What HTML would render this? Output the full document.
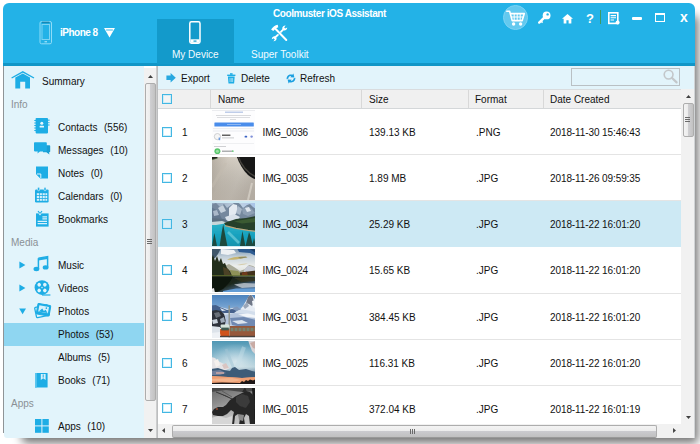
<!DOCTYPE html>
<html><head><meta charset="utf-8">
<style>
*{box-sizing:border-box;margin:0;padding:0}
html,body{width:700px;height:444px;overflow:hidden;background:#fff;font-family:"Liberation Sans",sans-serif;font-size:10px;color:#111}
.a{position:absolute}
svg{position:absolute;overflow:visible}
#shadow{left:22px;top:16px;width:676px;height:427px;border-radius:4px;background:rgba(0,0,0,.55);filter:blur(5px)}
#win{left:3px;top:3px;width:692px;height:434.5px;background:#fff;border-radius:6px 6px 0 0;overflow:hidden}
#hdr{left:3px;top:3px;width:692px;height:61px;background:#23b2e7;border-radius:6px 6px 0 0}
#strip{left:3px;top:63px;width:692px;height:3px;background:#1196c7}
#tab1{left:157px;top:19px;width:77px;height:45px;background:#139acb}
.w{color:#fff;white-space:nowrap}
.tl{top:48px;height:13px;line-height:13px;font-size:10px;color:#f2fbff}
#side{left:4px;top:66px;width:140px;height:371.5px;background:#e2f4fb;border-radius:0 0 0 3px}
#lb{left:3px;top:66px;width:1px;height:367px;background:#8f9497}
.si{position:absolute;left:4px;width:140px;height:23px;line-height:23px;white-space:nowrap}
.si span{position:absolute;left:54px;word-spacing:.5px}
.sec{position:absolute;left:11px;color:#8a9095;height:23px;line-height:23px}
#sscroll{left:144px;top:68px;width:13px;height:369.5px;background:#f1f1f1}
#sep{left:156px;top:66px;width:2px;height:371.5px;background:linear-gradient(90deg,#d4d4d4,#b4b6b8)}
#tb{left:158px;top:66px;width:537px;height:23px;background:#e2f4fb}
.tbi{position:absolute;top:67px;height:23px;line-height:23px}
#th{left:158px;top:89px;width:523px;height:20px;background:#f0f0f0;border-top:1px solid #d9dcde;border-bottom:1px solid #d4d7d9}
.thc{position:absolute;top:90px;height:20px;line-height:20px;padding-left:7px}
.vl{position:absolute;top:90px;height:18px;width:1px;background:#d8d8d8}
.row{position:absolute;left:158px;width:523px;height:46px;border-bottom:1px solid #e4e4e4;line-height:48px;white-space:nowrap}
.row.sel{background:#cde9f4;border-bottom-color:#cde9f4}
.cb{position:absolute;left:162px;width:10px;height:10px;border:1px solid #43b7e3;background:rgba(255,255,255,.25);box-shadow:inset 0 0 0 1px rgba(190,232,248,.7)}
.row b{font-weight:normal;position:absolute;top:0}
.thumb{position:absolute;left:54px;top:2px;width:43px;height:43px;overflow:hidden}
.thumb svg{left:0;top:0}
#vs{left:681px;top:89px;width:14px;height:335px;background:#f1f1f1}
#hs{left:158px;top:424px;width:537px;height:13.5px;background:#f1f1f1}
.thb{position:absolute;border:1px solid #adadad;border-radius:2px}
#rb{left:694px;top:66px;width:1px;height:371.5px;background:#d0d3d5}
</style></head><body>
<div class="a" id="shadow"></div>
<div class="a" id="win"></div>
<div class="a" id="hdr"></div><div class="a" id="strip"></div>
<div class="a" id="tab1"></div>
<div class="a w" style="left:273px;top:8px;height:12px;line-height:12px;font-weight:bold;letter-spacing:-.42px">Coolmuster iOS Assistant</div>
<div class="a w" style="left:60px;top:27px;height:12px;line-height:12px;font-weight:bold;letter-spacing:-.5px">iPhone 8</div>
<div class="a w tl" style="left:172px">My Device</div>
<div class="a w tl" style="left:251px">Super Toolkit</div>

<!-- header icons -->
<svg id="ic-dev" style="left:39px;top:20px" width="14" height="25" viewBox="0 0 14 25"><rect x="1" y="1.5" width="11.5" height="22.3" rx="1.5" fill="none" stroke="#8fdcf7" stroke-width="1"/><rect x="3" y="4.5" width="7.5" height="15" fill="none" stroke="#7dd3f3" stroke-width="1"/><rect x="3" y="1.6" width="7.5" height="1.6" fill="#1687b5"/><rect x="5.5" y="21" width="2.5" height="1.4" fill="#8fdcf7"/></svg>
<svg id="ic-dd" style="left:104px;top:28px" width="11" height="10" viewBox="0 0 12 11"><path d="M0 0H12L6 10.5Z" fill="#fff"/><path d="M2.3 2.2H9.7" stroke="#23b2e7" stroke-width="1"/></svg>
<svg id="ic-phone" style="left:189px;top:21px" width="12" height="23" viewBox="0 0 12 23"><rect x="0.8" y="0.8" width="10.2" height="21.4" rx="1.6" fill="none" stroke="#fff" stroke-width="1.5"/><rect x="1.5" y="18.3" width="9" height="3.5" fill="#fff"/><rect x="4.5" y="19.5" width="3" height="1.2" fill="#139acb"/></svg>
<svg id="ic-tools" style="left:271px;top:25px" width="18" height="18" viewBox="0 0 18 18"><g stroke="#fff" stroke-linecap="round" fill="none"><path d="M1.2 5.2Q3.6 1.6 7 0.9" stroke-width="2.6" stroke-linecap="butt"/><path d="M4.4 3.8L15.3 15" stroke-width="2"/><path d="M9.9 6.9L12.6 4.2" stroke-width="1.9"/><path d="M3.8 12.8L6.9 9.9" stroke-width="1.9"/></g><path d="M11.2 3.4A2.9 2.9 0 0 1 14.6 0.6L13.2 2.4L14.2 3.6L16.2 2.6A2.9 2.9 0 0 1 13 5.6Z" fill="#fff"/><path d="M5.6 13.2A2.9 2.9 0 0 1 2.4 16.2L3.8 14.4L2.8 13.2L0.8 14.2A2.9 2.9 0 0 1 4 11.2Z" fill="#fff"/></svg>

<div class="a" style="left:503px;top:5px;width:25px;height:25px;border-radius:50%;background:#63c9ef;border:1px solid #7dd3f4"></div>
<svg id="ic-cart" style="left:506px;top:10px" width="20" height="17" viewBox="0 0 20 17"><g fill="none" stroke="#fff" stroke-width="1.6" stroke-linejoin="round" stroke-linecap="round"><path d="M0.8 1.2H3.6L6.2 10.6H16.2L18.3 3.6H4.4"/><path d="M8.2 4V10M11.2 4V10M14.2 4V10M5.4 7H17" stroke-width="1"/></g><circle cx="7.6" cy="14" r="1.7" fill="#fff"/><circle cx="14.6" cy="14" r="1.7" fill="#fff"/></svg>
<svg id="ic-key" style="left:538px;top:11px" width="13" height="13" viewBox="0 0 13 13"><circle cx="8.6" cy="4.4" r="3.9" fill="#fff"/><circle cx="9.6" cy="3.4" r="1.2" fill="#23b2e7"/><path d="M6 6.8L1.2 11.6" stroke="#fff" stroke-width="2.4" stroke-linecap="round"/><path d="M3 10l1.6 1.6" stroke="#fff" stroke-width="1.6"/></svg>
<svg id="ic-home" style="left:562px;top:14px" width="11" height="9.5" viewBox="0 0 12 11" preserveAspectRatio="none"><path d="M6 0L12 5.6H10.2V11H7.2V7.2H4.8V11H1.8V5.6H0Z" fill="#fff"/></svg>
<div class="a w" style="left:586px;top:12px;height:14px;line-height:14px;font-weight:bold;font-size:13px">?</div>
<div class="a" style="left:600px;top:10px;width:1px;height:14px;background:#3d9a64"></div>
<svg id="ic-list" style="left:608px;top:12px" width="12" height="13" viewBox="0 0 12 13"><rect x="0.8" y="0.8" width="9" height="10.6" fill="none" stroke="#fff" stroke-width="1.6"/><path d="M2.6 3.6H8M2.6 5.8H8M2.6 8H6" stroke="#fff" stroke-width="1.1"/><circle cx="9.6" cy="10.6" r="2" fill="#fff"/></svg>
<div class="a" style="left:632px;top:16.5px;width:10px;height:3.5px;background:#fff;border-radius:1px"></div>
<div class="a" style="left:655px;top:13px;width:10px;height:9px;border:1px solid #fff;border-top-width:2px"></div>
<div class="a w" style="left:680px;top:9px;height:16px;line-height:16px;font-weight:bold;font-size:14px;">x</div>

<!-- sidebar -->
<div class="a" id="side"></div><div class="a" id="lb"></div>
<div class="si" style="top:323px;background:#8fd6f1"></div>
<div class="si" style="top:70px"><span style="left:38px">Summary</span></div>
<div class="sec" style="top:93px">Info</div>
<div class="si" style="top:116px"><span>Contacts&nbsp; (556)</span></div>
<div class="si" style="top:139px"><span>Messages&nbsp; (10)</span></div>
<div class="si" style="top:162px"><span>Notes&nbsp; (0)</span></div>
<div class="si" style="top:185px"><span>Calendars&nbsp; (0)</span></div>
<div class="si" style="top:208px"><span>Bookmarks</span></div>
<div class="sec" style="top:231px">Media</div>
<div class="si" style="top:254px"><span>Music</span></div>
<div class="si" style="top:277px"><span>Videos</span></div>
<div class="si" style="top:300px"><span>Photos</span></div>
<div class="si" style="top:323px"><span>Photos&nbsp; (53)</span></div>
<div class="si" style="top:346px"><span>Albums&nbsp; (5)</span></div>
<div class="si" style="top:369px"><span>Books&nbsp; (71)</span></div>
<div class="sec" style="top:392px">Apps</div>
<div class="si" style="top:415px"><span>Apps&nbsp; (10)</span></div>

<!-- sidebar icons -->
<svg id="si-home" style="left:11px;top:71px" width="24" height="18" viewBox="0 0 24 18"><path d="M0.6 7L11.8 0.8L23 7" fill="none" stroke="#1eade5" stroke-width="1.4"/><path d="M4.3 6.6L11.8 2.6L19 6.6V17.5H14.2V10.8H9.2V17.5H4.3Z" fill="#1eade5"/></svg>
<svg id="si-contacts" style="left:34px;top:118px" width="16" height="16" viewBox="0 0 16 16"><rect x="1.6" y="0" width="12.4" height="15.4" rx="0.8" fill="#1eade5"/><path d="M0.3 2.5H2M0.3 5H2M0.3 7.5H2M0.3 10H2M0.3 12.5H2" stroke="#1eade5" stroke-width="1"/><path d="M14 2.2H15.6M14 4.6H15.6M14 7H15.6" stroke="#57c3ec" stroke-width="1.4"/><circle cx="7.8" cy="5.3" r="1.5" fill="#e8f7fd"/><rect x="5.6" y="7.8" width="4.4" height="1.8" rx="0.6" fill="#e8f7fd"/></svg>
<svg id="si-msg" style="left:34px;top:142px" width="17" height="13" viewBox="0 0 17 13"><path d="M13 3.2H15.4Q16.2 3.2 16.2 4V9.4Q16.2 10.2 15.4 10.2H15L15.4 12.6L12.4 10.2H9V3.2Z" fill="#1a9ed3"/><path d="M0.8 0.2H12Q12.8 0.2 12.8 1V8.6Q12.8 9.4 12 9.4H6L3.4 11.4L3.8 9.4H0.8Q0 9.4 0 8.6V1Q0 0.2 0.8 0.2Z" fill="#1eade5"/></svg>
<svg id="si-notes" style="left:36px;top:166px" width="12" height="13" viewBox="0 0 12 13"><path d="M0 0.4H12V12.6H4.6L0 8Z" fill="#1eade5"/><path d="M0.4 8.2H4.4V12.4Z" fill="#1eade5"/><path d="M1 8H4.8V12" fill="none" stroke="#e2f4fb" stroke-width="1"/></svg>
<svg id="si-cal" style="left:35px;top:187px" width="14" height="16" viewBox="0 0 14 16"><rect x="0" y="2.4" width="13.6" height="13" rx="1.2" fill="#1eade5"/><rect x="2.6" y="0.2" width="2" height="3.6" rx="1" fill="#1eade5" stroke="#e2f4fb" stroke-width=".6"/><rect x="9" y="0.2" width="2" height="3.6" rx="1" fill="#1eade5" stroke="#e2f4fb" stroke-width=".6"/><g fill="#d8f1fb"><rect x="1.8" y="6.2" width="2.2" height="2"/><rect x="4.7" y="6.2" width="2.2" height="2"/><rect x="7.6" y="6.2" width="2.2" height="2"/><rect x="10.4" y="6.2" width="1.8" height="2"/><rect x="1.8" y="9" width="2.2" height="2"/><rect x="4.7" y="9" width="2.2" height="2"/><rect x="7.6" y="9" width="2.2" height="2"/><rect x="10.4" y="9" width="1.8" height="2"/><rect x="1.8" y="11.8" width="2.2" height="2"/><rect x="4.7" y="11.8" width="2.2" height="2"/><rect x="7.6" y="11.8" width="2.2" height="2"/><rect x="10.4" y="11.8" width="1.8" height="2"/></g></svg>
<svg id="si-bm" style="left:36px;top:211px" width="13" height="16" viewBox="0 0 13 16"><path d="M0 2.4H12.6V15.6H0Z" fill="#1eade5"/><path d="M2 0L4 2.6L6 0" fill="none" stroke="#1eade5" stroke-width="1.2"/><path d="M2.4 2.4L4 4.6L5.6 2.4Z" fill="#e2f4fb"/><path d="M6.4 5.8H11M6.4 7.8H11M1.6 10.4H11M1.6 12.6H11" stroke="#d8f1fb" stroke-width="1.2"/></svg>
<svg id="si-tri1" style="left:19px;top:261px" width="7" height="8" viewBox="0 0 7 8"><path d="M0.4 0.4L6.4 4L0.4 7.6Z" fill="#1eade5"/></svg>
<svg id="si-tri2" style="left:19px;top:284px" width="7" height="8" viewBox="0 0 7 8"><path d="M0.4 0.4L6.4 4L0.4 7.6Z" fill="#1eade5"/></svg>
<svg id="si-tri3" style="left:19px;top:308px" width="8" height="7" viewBox="0 0 8 7"><path d="M0.2 0.4H7L3.6 6.2Z" fill="#1eade5"/></svg>
<svg id="si-music" style="left:33px;top:256px" width="16" height="16" viewBox="0 0 16 16"><path d="M5.4 2.2L14.6 0.6V11.4" fill="none" stroke="#1eade5" stroke-width="1.5"/><path d="M5.4 2.2V13" fill="none" stroke="#1eade5" stroke-width="1.5"/><path d="M5.4 2.4L14.6 0.8V3L5.4 4.6Z" fill="#1eade5"/><ellipse cx="3.4" cy="13" rx="2.9" ry="2.2" fill="#1eade5"/><ellipse cx="12.6" cy="11.4" rx="2.9" ry="2.2" fill="#1eade5"/></svg>
<svg id="si-video" style="left:34px;top:280px" width="17" height="16" viewBox="0 0 17 16"><circle cx="8" cy="7.6" r="7.4" fill="#1eade5"/><path d="M8 15L16.4 15" stroke="#1eade5" stroke-width="1.2"/><g fill="#e2f4fb" transform="rotate(45 8 7.6)"><circle cx="8" cy="3.6" r="1.8"/><circle cx="8" cy="11.6" r="1.8"/><circle cx="4" cy="7.6" r="1.8"/><circle cx="12" cy="7.6" r="1.8"/><circle cx="8" cy="7.6" r=".7"/></g></svg>
<svg id="si-photos" style="left:34px;top:303px" width="17" height="16" viewBox="0 0 17 16"><g transform="rotate(-12 8 8)"><rect x="1.4" y="3" width="13" height="10.6" rx="1" fill="#e2f4fb" stroke="#1eade5" stroke-width="1.3"/></g><g transform="rotate(10 9 7)"><rect x="3" y="1.4" width="13" height="10.6" rx="1" fill="#1eade5" stroke="#1eade5" stroke-width="1"/><rect x="4.6" y="3" width="9.8" height="6.4" fill="#d8f1fb"/><path d="M5 9.2L8 5.6L10 7.8L11.6 6.4L14 9.2Z" fill="#1eade5"/><circle cx="12" cy="4.6" r=".8" fill="#1eade5"/></g></svg>
<svg id="si-books" style="left:35px;top:373px" width="13" height="15" viewBox="0 0 13 15"><rect x="0" y="0" width="12.6" height="14.6" rx=".6" fill="#1eade5"/><rect x="0" y="0" width="1.8" height="14.6" fill="#5cc5ee"/><path d="M5.8 1H10.6V7L8.2 5.2L5.8 7Z" fill="#d8f1fb"/><path d="M8.2 1.4V4.6" stroke="#1eade5" stroke-width="1"/></svg>
<svg id="si-apps" style="left:35px;top:419px" width="14" height="14" viewBox="0 0 14 14"><rect x="0" y="0" width="6.4" height="6.4" fill="#1eade5"/><rect x="7.4" y="0" width="6.4" height="6.4" fill="#1eade5"/><rect x="0" y="7.4" width="6.4" height="6.4" fill="#1eade5"/><rect x="7.4" y="7.4" width="6.4" height="6.4" fill="#1eade5"/></svg>

<!-- sidebar scrollbar -->
<div class="a" id="sscroll"></div><div class="a" id="sep"></div>
<svg style="left:148px;top:75px" width="5" height="3" viewBox="0 0 7 4"><path d="M0 4L3.5 0L7 4Z" fill="#404040"/></svg>
<div class="thb" style="left:144.5px;top:83px;width:11.5px;height:318px;background:linear-gradient(90deg,#f3f3f3,#ececec 42%,#cfcfd2 48%,#c2c2c2)"></div>
<div class="a" style="left:147px;top:239px;width:5px;height:5px;background:repeating-linear-gradient(180deg,#6a6a6a 0 1px,transparent 1px 2px)"></div>
<svg style="left:148px;top:429px" width="5" height="3" viewBox="0 0 7 4"><path d="M0 0L3.5 4L7 0Z" fill="#404040"/></svg>

<!-- toolbar -->
<div class="a" id="tb"></div>
<svg id="tb-exp" style="left:166px;top:73px" width="10" height="10" viewBox="0 0 10 10"><path d="M0.4 2.6H4.6V0L9.8 4.8L4.6 9.6V7H0.4Z" fill="#27a8e0"/></svg>
<div class="tbi" style="left:181px">Export</div>
<svg id="tb-del" style="left:227px;top:73px" width="9" height="11" viewBox="0 0 9 11"><path d="M0.2 1.6H8.4V3H0.2Z" fill="#1eade5"/><rect x="3" y="0.2" width="2.6" height="1.6" fill="#1eade5"/><path d="M0.9 3.6H7.7L7.1 10.4H1.5Z" fill="#1eade5"/><path d="M3 5V9M4.3 5V9M5.6 5V9" stroke="#bfe8f8" stroke-width=".7"/></svg>
<div class="tbi" style="left:241px">Delete</div>
<svg id="tb-ref" style="left:286px;top:73px" width="10" height="11" viewBox="0 0 10 11"><path d="M0.6 6.2C0.4 3 3.2 0.8 6.4 1.8L7.4 0.4L8.4 4.6L4.2 4.2L5.2 3.2C3.6 2.8 2.4 4 2.4 5.4Z" fill="#1a9fe0"/><path d="M9.4 4.8C9.6 8 6.8 10.2 3.6 9.2L2.6 10.6L1.6 6.4L5.8 6.8L4.8 7.8C6.4 8.2 7.6 7 7.6 5.6Z" fill="#1a9fe0"/></svg>
<div class="tbi" style="left:300px">Refresh</div>
<div class="a" style="left:571px;top:68px;width:109px;height:18px;border:1px solid #b9c0c4;background:#e2f4fb"></div>
<svg id="tb-search" style="left:663px;top:69px" width="15" height="15" viewBox="0 0 15 15"><circle cx="5.6" cy="5.6" r="4.4" fill="none" stroke="#c3c7ca" stroke-width="1.6"/><path d="M8.8 8.8L13.6 13.4" stroke="#c3c7ca" stroke-width="2.2" stroke-linecap="round"/></svg>

<!-- table header -->
<div class="a" id="th"></div>
<div class="cb" style="top:94px"></div>
<div class="vl" style="left:210px"></div><div class="vl" style="left:361px"></div><div class="vl" style="left:468px"></div><div class="vl" style="left:543px"></div>
<div class="thc" style="left:211px">Name</div>
<div class="thc" style="left:362px">Size</div>
<div class="thc" style="left:468px">Format</div>
<div class="thc" style="left:543px">Date Created</div>

<!-- rows -->
<div class="row" style="top:109px"><b style="left:24px">1</b><div class="thumb" id="t1" style="top:1px;height:44px"><svg width="43" height="44" viewBox="0 0 43 44"><rect width="43" height="44" fill="#fdfdfe"/><rect x="0" y="0" width="43" height="0.8" fill="#e6e8ec"/><rect x="13" y="1.6" width="18" height="1.2" fill="#9db4dd" opacity=".8"/><rect x="4" y="5" width="35" height="1" fill="#d9dadd"/><rect x="5" y="7" width="33" height="1" fill="#dcdde0"/><rect x="18" y="9" width="6" height="1" fill="#dcdde0"/><rect x="2.4" y="12.6" width="39.4" height="3.8" rx=".5" fill="#4a8deb"/><rect x="15" y="14" width="14" height="1" fill="#8db7f3"/><rect x="1" y="18.4" width="41" height=".7" fill="#e3e4e8"/><rect x="1" y="20.2" width="41" height="1.6" fill="#f1f2f5"/><circle cx="5.4" cy="26.6" r="3.1" fill="#f6f6f6" stroke="#c4c5c8" stroke-width=".8"/><rect x="6.6" y="27.6" width="1.6" height="2.6" fill="#6a9be0"/><rect x="10" y="24.6" width="8.4" height="1.2" fill="#3c3c3c"/><rect x="10" y="27.4" width="12" height="1" fill="#c9cacc"/><rect x="32.6" y="25.8" width="2.6" height="1.8" rx=".7" fill="#3a63c4"/><circle cx="39.6" cy="26.6" r="1.2" fill="#7f8fd8"/><rect x="1" y="33" width="41" height=".7" fill="#e9eaed"/><rect x="2" y="36" width="12" height="1" fill="#cfd0d3"/><circle cx="5.4" cy="41.2" r="3" fill="#57c66a"/><circle cx="5.4" cy="41.2" r="1.5" fill="#9be0a5"/><rect x="10" y="40.6" width="11" height="1.2" fill="#9a9c9f"/><rect x="20" y="40.4" width="1.6" height="1.6" fill="#79cf86"/></svg></div><b style="left:104.5px;letter-spacing:-.15px">IMG_0036</b><b style="left:211px">139.13 KB</b><b style="left:318px">.PNG</b><b style="left:392px;letter-spacing:-.1px">2018-11-30 15:46:43</b></div>
<div class="row" style="top:155px"><b style="left:24px">2</b><div class="thumb" id="t2" style="top:2px;height:43px"><svg width="43" height="43" viewBox="0 0 43 43"><defs><linearGradient id="g2" x1="0" y1="0" x2="1" y2=".4"><stop offset="0" stop-color="#b9b1a6"/><stop offset=".35" stop-color="#d3ccc1"/><stop offset=".7" stop-color="#d9d3c9"/><stop offset="1" stop-color="#cfc8be"/></linearGradient><linearGradient id="g2b" x1="0" y1="0" x2="0" y2="1"><stop offset="0" stop-color="#000" stop-opacity="0"/><stop offset="1" stop-color="#6b6259" stop-opacity=".28"/></linearGradient><filter id="b2"><feGaussianBlur stdDeviation=".7"/></filter></defs><rect width="43" height="43" fill="url(#g2)"/><rect width="43" height="43" fill="url(#g2b)"/><g filter="url(#b2)"><path d="M24.5 -1C27 6 31 13 36 18C39 20.4 41 21.4 44 22.4V-1Z" fill="#151515"/><path d="M26 -1C29 8 34 15 44 20" fill="none" stroke="#5a564f" stroke-width="1.4" opacity=".7"/><path d="M-1 -1H6L5 1.6L-1 3Z" fill="#23231f"/><path d="M-1 3L6 1" stroke="#5d8a4e" stroke-width="1" opacity=".5"/><path d="M0 30L14 6" stroke="#c3bbb0" stroke-width="3" opacity=".5"/><path d="M36 43L40 26" stroke="#e2dcd2" stroke-width="2" opacity=".6"/></g></svg></div><b style="left:104.5px;letter-spacing:-.15px">IMG_0035</b><b style="left:211px">1.89 MB</b><b style="left:318px">.JPG</b><b style="left:392px;letter-spacing:-.1px">2018-11-26 09:59:35</b></div>
<div class="row sel" style="top:201px"><b style="left:24px">3</b><div class="thumb" id="t3" style="top:2px;height:43px"><svg width="43" height="43" viewBox="0 0 43 43"><defs><linearGradient id="g3s" x1="0" y1="0" x2="1" y2="0"><stop offset="0" stop-color="#8fa3ba"/><stop offset=".6" stop-color="#c3d3e4"/><stop offset="1" stop-color="#a9c4e8"/></linearGradient><linearGradient id="g3l" x1="0" y1="0" x2="0" y2="1"><stop offset="0" stop-color="#2fb4c8"/><stop offset=".5" stop-color="#17a2bf"/><stop offset="1" stop-color="#1791ab"/></linearGradient><filter id="b3"><feGaussianBlur stdDeviation=".6"/></filter></defs><rect width="43" height="43" fill="url(#g3s)"/><g filter="url(#b3)"><path d="M-1 2L4 0L8 4L12 1L15 5L19 2L22 0L25 -1L28 1L31 5L35 2L38 1L41 4L44 6V22H-1Z" fill="#74889e"/><path d="M-1 4L6 8L10 16L0 20Z" fill="#64788f"/><path d="M17 5L21 1L25 2L26 8L22 13L17 14Z" fill="#e4eaf1"/><path d="M26 3L30 6L28 12L24 10Z" fill="#a9b8c9"/><path d="M30 6L35 3L40 6L43 10L36 13L31 11Z" fill="#8d9fb4"/><path d="M33 5L37 4L39 8L35 9Z" fill="#dfe6ee"/><path d="M13 14L22 11L28 14L24 19L15 18Z" fill="#d9e1ea"/><path d="M6 5L11 2L14 8L9 10Z" fill="#c4d0dc"/><path d="M1 8L5 7L7 12L2 13Z" fill="#a9b8c9"/><path d="M-1 15L12 16L20 20L6 22L-1 21Z" fill="#5c7082"/><rect x="-1" y="20" width="45" height="24" fill="url(#g3l)"/><path d="M-1 19L10 18L16 20L4 22L-1 22Z" fill="#c9d6d9"/><path d="M12 20L24 16L34 15L44 13V28L34 27L22 25L14 23Z" fill="#27402a"/><path d="M22 18.6L30 17L40 15.6L44 15V19L30 20.6Z" fill="#3b5a33"/><path d="M13 22.6L24 25.4L36 27.4L44 28.4" fill="none" stroke="#b9a77f" stroke-width="1.1"/><path d="M16 29L22 35L27 40" stroke="#7fd6e0" stroke-width="2.6" opacity=".6" fill="none"/><path d="M0 43L1.4 35L2.4 30L3.4 35L5 43ZM28 43L30.4 28L33.4 43ZM33.6 43L37 29L38.6 33L41 43ZM40 43L42 35L44 43Z" fill="#1d4a40"/><path d="M7.6 43L9.6 30L11.2 21L12.8 30L15.4 43Z" fill="#1f4a3c"/></g></svg></div><b style="left:104.5px;letter-spacing:-.15px">IMG_0034</b><b style="left:211px">25.29 KB</b><b style="left:318px">.JPG</b><b style="left:392px;letter-spacing:-.1px">2018-11-22 16:01:20</b></div>
<div class="row" style="top:247px;height:47px"><b style="left:24px">4</b><div class="thumb" id="t4" style="top:2px;height:43px"><svg width="43" height="43" viewBox="0 0 43 43"><defs><linearGradient id="g4s" x1="0" y1="0" x2="0" y2="1"><stop offset="0" stop-color="#7d98b0"/><stop offset=".18" stop-color="#c3d0da"/><stop offset=".4" stop-color="#eceeec"/><stop offset=".6" stop-color="#d9dbd5"/></linearGradient><linearGradient id="g4w" x1="0" y1="0" x2="1" y2="1"><stop offset="0" stop-color="#0e170e"/><stop offset=".45" stop-color="#1e2a20"/><stop offset=".72" stop-color="#47678a"/><stop offset="1" stop-color="#6a9dd0"/></linearGradient><filter id="b4"><feGaussianBlur stdDeviation=".7"/></filter></defs><rect width="43" height="43" fill="url(#g4s)"/><g filter="url(#b4)"><path d="M-1 -1H9L6 5L3 9L-1 11Z" fill="#3f566b"/><path d="M25 -1H44V7L38 4L32 3.4L27 3Z" fill="#2f5c92"/><path d="M36 -1H44V4Z" fill="#1f3f68"/><path d="M9 0L22 1L24 4L16 6L9 5Z" fill="#eef1f3"/><path d="M15 10.6Q24 6.4 36 8Q30 10 24 10.4Q19 11.2 15 10.6Z" fill="#c6b46f"/><path d="M26 8.2L34 7.6L35 8.6L28 9.4Z" fill="#8f8a62"/><path d="M25 16Q30 14 36 14.6Q31 16.6 25 16Z" fill="#d2c79f" opacity=".8"/><path d="M12 17L17 15L22 18L28 22L33 20L37 16L41 17L44 19V27H12Z" fill="#a9aa98"/><path d="M32 21L36 16.4L40 17.4L44 19V23H32Z" fill="#c7cbd6"/><path d="M18 21L26 22L30 26L19 27Z" fill="#8e9258"/><path d="M28 23.4L36 22.4L44 21.6V27H28Z" fill="#43301d"/><path d="M30 23.6L35 22.8L36 27H30Z" fill="#6f3b1f"/><path d="M-1 11L1 6L3 12L5 7L7 13L9 9L11 15L13 14L15 19L18 22L20 27H-1Z" fill="#232d1c"/><path d="M11 18L16 20L19 26L12 26Z" fill="#4c4325"/><rect x="-1" y="26.2" width="45" height="1.3" fill="#5f6f30"/><rect x="-1" y="27.4" width="45" height="17" fill="url(#g4w)"/><path d="M-1 27.4H21L17 34L11 40L3 44H-1Z" fill="#0c130c"/><path d="M22 29L34 28L44 29V32L30 33Z" fill="#33321f" opacity=".85"/><path d="M22 35.4L32 34L44 34.6V38L30 39Z" fill="#c3cbd2" opacity=".8"/><path d="M11 42L24 39.6L44 39.4V44H11Z" fill="#649cd4"/><path d="M-1 40L2 39L3 44H-1Z" fill="#e6e6e6"/></g></svg></div><b style="left:104.5px;letter-spacing:-.15px">IMG_0024</b><b style="left:211px">15.65 KB</b><b style="left:318px">.JPG</b><b style="left:392px;letter-spacing:-.1px">2018-11-22 16:01:20</b></div>
<div class="row" style="top:294px"><b style="left:24px">5</b><div class="thumb" id="t5" style="top:1px;height:43px"><svg width="43" height="43" viewBox="0 0 43 43"><defs><linearGradient id="g5s" x1="0" y1="0" x2="0" y2="1"><stop offset="0" stop-color="#4c83bd"/><stop offset=".22" stop-color="#6b9bcd"/><stop offset=".4" stop-color="#93b6da"/></linearGradient><filter id="b5"><feGaussianBlur stdDeviation=".65"/></filter></defs><rect width="43" height="43" fill="url(#g5s)"/><g filter="url(#b5)"><path d="M27 16L31 11L34 6L37 1L39 -1L41 2L44 5V20H27Z" fill="#e6ecf4"/><path d="M36 2L39 -1L41 3L42 8L40 11L37 9L34 8Z" fill="#6f7888"/><path d="M31 11L35 7L37 11L33 14Z" fill="#9aa6b8"/><path d="M40 6L44 5V14L41 12Z" fill="#f4f7fa"/><path d="M-1 12L4 10.4L10 12.6L16 14L22 12.4L28 14L34 15L44 17V31H-1Z" fill="#d3deec"/><path d="M-1 10.6L4 10L9 12.6L15 15L20 14L26 15L22 18L12 18L2 16L-1 16Z" fill="#45618c"/><path d="M20 12.8L25 11.6L29 14.6L24 16Z" fill="#7f98bb"/><path d="M8 13L14 15.6L10 16Z" fill="#dfe8f2"/><path d="M-1 16L4 15L9 16L12 19L14 25L13 30L9 33L-1 33Z" fill="#2d333b"/><path d="M2 18L7 17L9 21L4 23Z" fill="#6a7079"/><path d="M0 25L5 24L6 28L1 29Z" fill="#c9d1db"/><path d="M8 24L12 22L13 27L9 28Z" fill="#9fabb9"/><path d="M13 20L22 18L34 19L44 21V31L28 33L14 29Z" fill="#b4c4dc"/><path d="M18 23L32 22L44 25V31L30 32L20 30Z" fill="#6f89b2"/><path d="M26 19.6L36 18.6L44 20.6V23L34 22Z" fill="#f2f5f9"/><path d="M20 26L30 25L36 28L26 29Z" fill="#dbe4ef"/><rect x="-1" y="33" width="45" height="11" fill="#eef1f5"/><path d="M-1 31L8 32L8 37L-1 38Z" fill="#dde3ea"/><rect x="16.5" y="10.4" width="1.4" height="32" fill="#8d9288"/><path d="M8.2 34H17.4V41H8.6Q7.6 38 8.2 34Z" fill="#cf521b"/><rect x="8.6" y="29.6" width="8.8" height="3.6" rx=".8" fill="#d6e4dc"/><rect x="9.2" y="32.6" width="7.6" height="2.8" fill="#3f5a4f"/><rect x="18" y="31" width="26" height="10" fill="#96583a"/><rect x="18.6" y="32.8" width="25.4" height="3.4" fill="#73836f"/><path d="M22 32.8V36.2M26 32.8V36.2M30 32.8V36.2M34 32.8V36.2M38 32.8V36.2M42 32.8V36.2" stroke="#96583a" stroke-width="1"/><rect x="8" y="40.8" width="36" height="1.4" fill="#4a423d"/></g></svg></div><b style="left:104.5px;letter-spacing:-.15px">IMG_0031</b><b style="left:211px">384.45 KB</b><b style="left:318px">.JPG</b><b style="left:392px;letter-spacing:-.1px">2018-11-22 16:01:20</b></div>
<div class="row" style="top:340px"><b style="left:24px">6</b><div class="thumb" id="t6" style="top:1px;height:43px"><svg width="43" height="43" viewBox="0 0 43 43"><defs><linearGradient id="g6s" x1="0" y1="0" x2="0" y2="1"><stop offset="0" stop-color="#4f97b4"/><stop offset=".3" stop-color="#7fb3c9"/><stop offset=".6" stop-color="#b4d0da"/><stop offset=".75" stop-color="#6f8ea6"/><stop offset=".82" stop-color="#e79b76"/><stop offset="1" stop-color="#f0a77c"/></linearGradient><radialGradient id="g6r" cx=".55" cy=".68" r=".6"><stop offset="0" stop-color="#fff" stop-opacity=".55"/><stop offset="1" stop-color="#fff" stop-opacity="0"/></radialGradient><filter id="b6"><feGaussianBlur stdDeviation=".7"/></filter></defs><rect width="43" height="43" fill="url(#g6s)"/><rect width="43" height="30" fill="url(#g6r)"/><g filter="url(#b6)"><path d="M36 -1H44V14L40 10L38 5Z" fill="#d7d3d6"/><path d="M38 2L44 0V8L41 7Z" fill="#c39a8f" opacity=".7"/><path d="M22 28L14 8" stroke="#9fc3d3" stroke-width="3" opacity=".5"/><path d="M24 28L32 6" stroke="#c6dde6" stroke-width="4" opacity=".45"/><path d="M-1 16L3 17L6 20L10 22L14 24L18 27L12 30L-1 30Z" fill="#e6e4e6"/><path d="M2 20L6 18L8 24L4 26Z" fill="#f6f1ee"/><path d="M10 24L14 22L17 27L12 28Z" fill="#d9c5c2"/><path d="M-1 28L6 27L12 29L18 30L20 27L23 26L27 29L34 28L40 30L44 31V36L30 37L16 36L-1 35Z" fill="#3d5b78"/><path d="M-1 30L8 29L14 32L8 34L-1 34Z" fill="#6f7f9c"/><path d="M4 31L12 31L12 33L4 33Z" fill="#c9a6a4" opacity=".8"/><path d="M-1 35L16 36L30 37L44 36V44H-1Z" fill="#ee9f73"/><path d="M-1 38L20 37L30 39L20 41L-1 40Z" fill="#f4b48c"/><path d="M-1 42L10 41.6L28 42L30 40L32 41L34 39L36 40L38 38.6L41 39.6L44 38V44H-1Z" fill="#1d1613"/></g></svg></div><b style="left:104.5px;letter-spacing:-.15px">IMG_0025</b><b style="left:211px">116.31 KB</b><b style="left:318px">.JPG</b><b style="left:392px;letter-spacing:-.1px">2018-11-22 16:01:20</b></div>
<div class="row" style="top:386px;border-bottom:none"><b style="left:24px">7</b><div class="thumb" id="t7" style="top:2px;height:43px"><svg width="43" height="43" viewBox="0 0 43 43"><defs><linearGradient id="g7s" x1="0" y1="0" x2=".3" y2="1"><stop offset="0" stop-color="#6a6a6a"/><stop offset=".35" stop-color="#8d8d8d"/><stop offset=".7" stop-color="#b9b9b9"/><stop offset="1" stop-color="#c9c9c9"/></linearGradient><filter id="b7"><feGaussianBlur stdDeviation=".7"/></filter></defs><rect width="43" height="43" fill="url(#g7s)"/><g filter="url(#b7)"><path d="M-1 -1H44V3L30 4L14 2L-1 4Z" fill="#4a4a4a"/><path d="M4 4L14 8L22 12" stroke="#3a3a3a" stroke-width="1"/><path d="M10 3L20 9" stroke="#555" stroke-width=".8"/><path d="M-1 30L6 28L14 30L20 28L22 34L18 38H-1Z" fill="#d6d6d6"/><path d="M40 -1H44V38H40L41 20Z" fill="#1b1b1b"/><path d="M18 12L24 8L30 5L34 3L38 4L42 8L43 16L42 26L43 37H38L37 28L34 26L32 30L33 37H27L28 30L26 26L23 28L22 37H20L21 28L22 24L19 22L15 26L11 28L6 28L1 27L0 24L2 21L6 19L11 19L14 17Z" fill="#262626"/><path d="M24 9L30 6L36 8L38 14L34 20L28 18L24 14Z" fill="#3a3a3a"/><path d="M30 4L33 -1L35 4Z" fill="#2a2a2a"/><path d="M26 26L32 27L31 33L27 32Z" fill="#8a8a8a"/><circle cx="5" cy="21" r=".9" fill="#a04a30"/></g></svg></div><b style="left:104.5px;letter-spacing:-.15px">IMG_0015</b><b style="left:211px">372.04 KB</b><b style="left:318px">.JPG</b><b style="left:392px;letter-spacing:-.1px">2018-11-22 16:01:19</b></div>
<div class="cb" style="top:127px"></div><div class="cb" style="top:173px"></div><div class="cb" style="top:219px"></div><div class="cb" style="top:265px"></div><div class="cb" style="top:311px"></div><div class="cb" style="top:358px"></div><div class="cb" style="top:403px"></div>

<!-- scrollbars -->
<div class="a" id="vs"></div>
<svg style="left:686px;top:95px" width="5" height="3" viewBox="0 0 7 4"><path d="M0 4L3.5 0L7 4Z" fill="#404040"/></svg>
<div class="thb" style="left:683px;top:103px;width:11px;height:34px;background:linear-gradient(90deg,#f3f3f3,#ececec 42%,#cfcfd2 48%,#c2c2c2)"></div>
<div class="a" style="left:685px;top:117px;width:5px;height:5px;background:repeating-linear-gradient(180deg,#6a6a6a 0 1px,transparent 1px 2px)"></div>
<svg style="left:686px;top:416px" width="5" height="3" viewBox="0 0 7 4"><path d="M0 0L3.5 4L7 0Z" fill="#404040"/></svg>
<div class="a" id="hs"></div>
<svg style="left:162px;top:428px" width="3" height="5" viewBox="0 0 4 7"><path d="M4 0L0 3.5L4 7Z" fill="#404040"/></svg>
<div class="thb" style="left:172px;top:425px;width:485px;height:12.5px;border-bottom-color:#999;background:linear-gradient(180deg,#f3f3f3,#ececec 42%,#cbcbcf 46%,#c0c0c0)"></div>
<div class="a" style="left:410px;top:429px;width:5px;height:5px;background:repeating-linear-gradient(90deg,#6a6a6a 0 1px,transparent 1px 2px)"></div>
<svg style="left:673px;top:428px" width="3" height="5" viewBox="0 0 4 7"><path d="M0 0L4 3.5L0 7Z" fill="#404040"/></svg>
<div class="a" id="rb"></div>
</body></html>
